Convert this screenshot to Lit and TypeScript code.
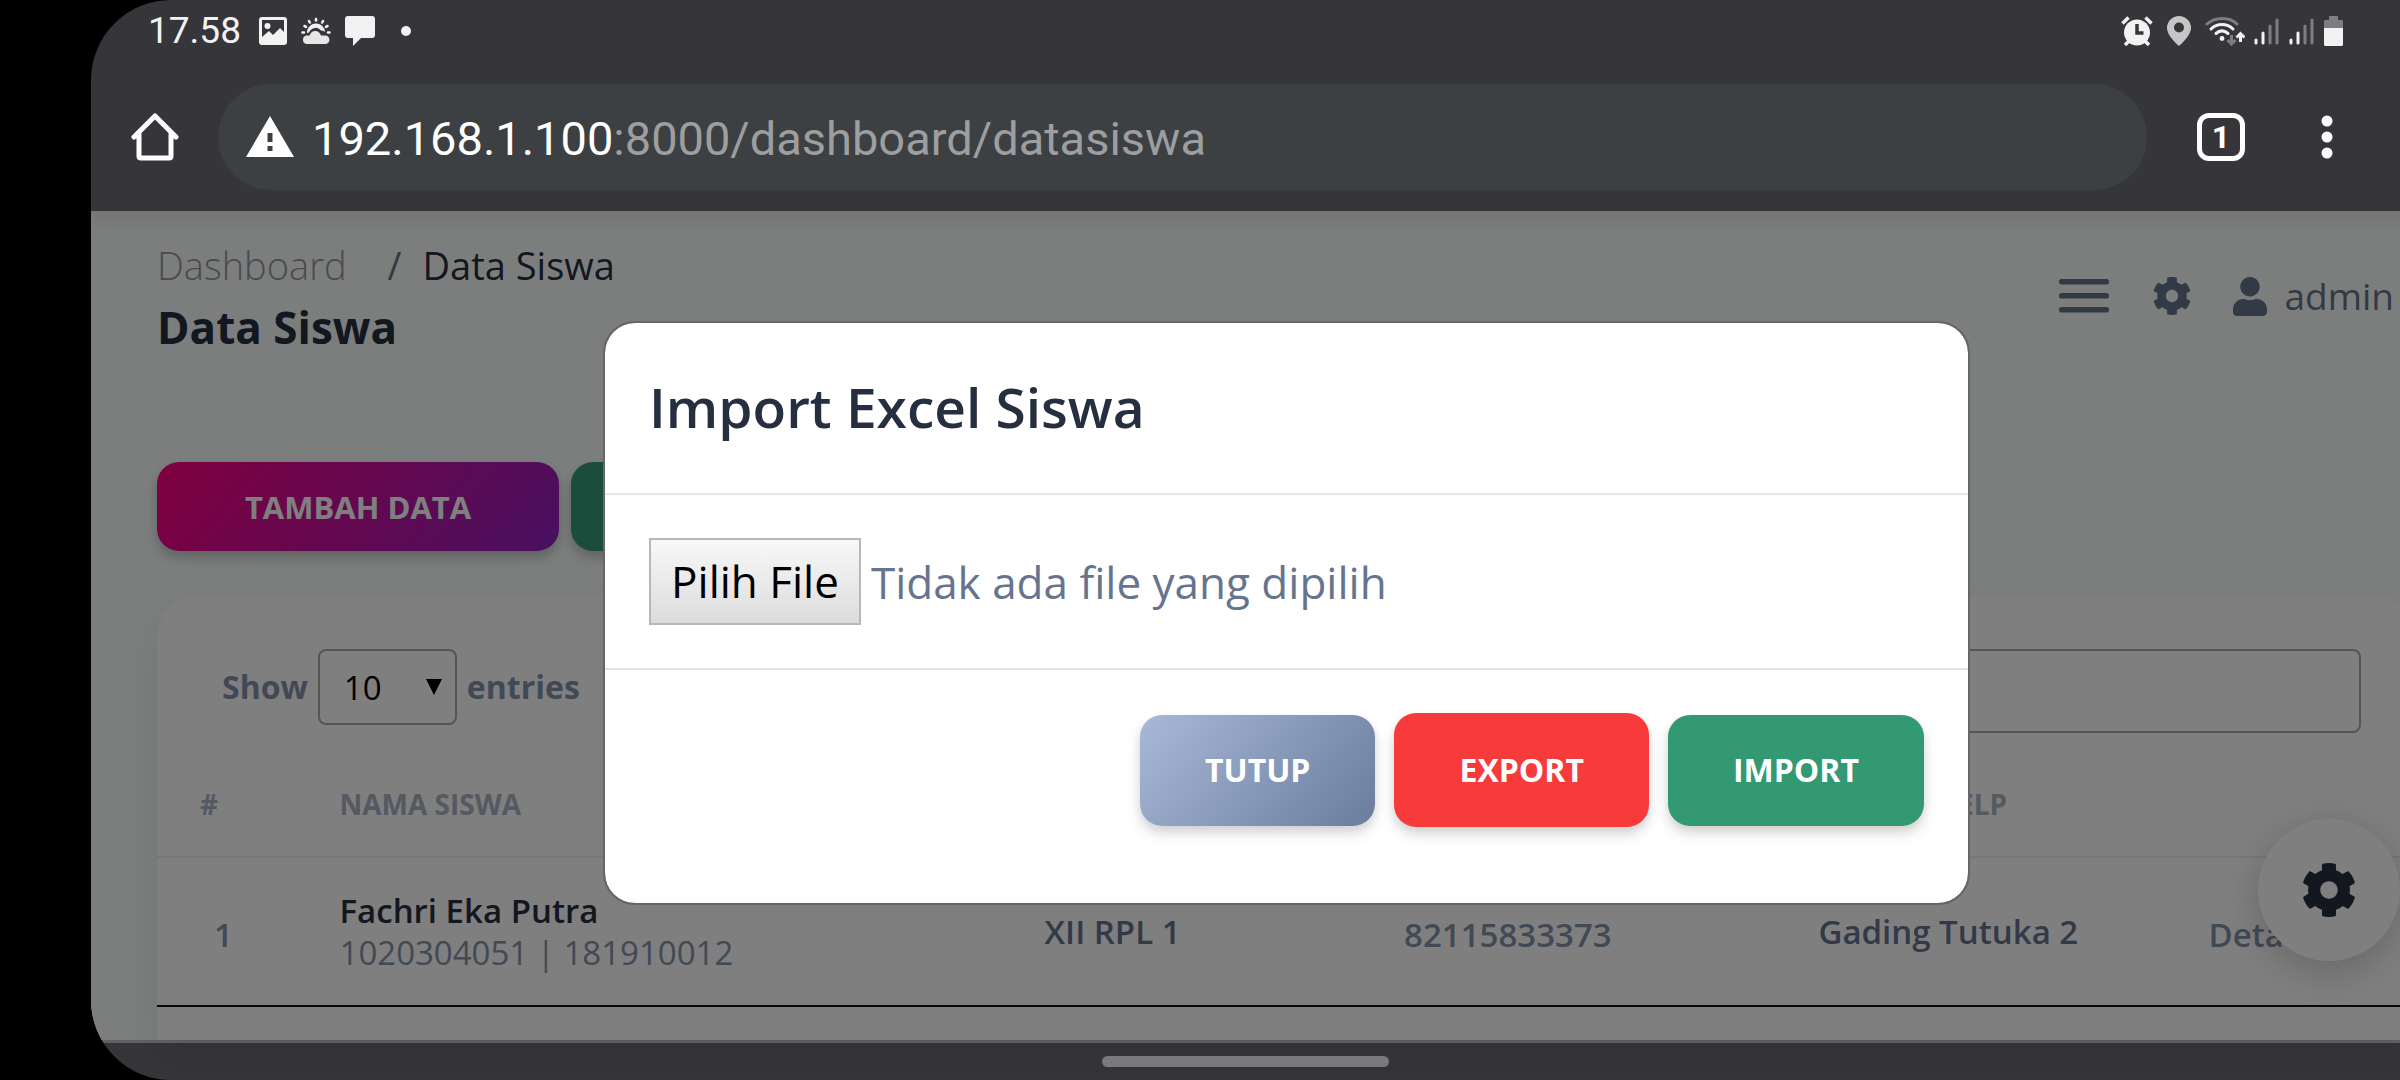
import { LitElement, html, css, svg } from "lit";
import { customElement } from "lit/decorators.js";

const cogPath =
  "M487.4 315.7l-42.6-24.6c4.3-23.2 4.3-47 0-70.2l42.6-24.6c4.9-2.8 7.1-8.6 5.5-14-11.1-35.6-30-67.8-54.7-94.6-3.8-4.1-10-5.1-14.8-2.3L380.8 110c-17.9-15.4-38.5-27.3-60.8-35.1V25.8c0-5.6-3.9-10.5-9.4-11.7-36.7-8.2-74.3-7.8-109.2 0-5.5 1.2-9.4 6.1-9.4 11.7V75c-22.2 7.9-42.8 19.8-60.8 35.1L88.7 85.5c-4.9-2.8-11-1.9-14.8 2.3-24.7 26.7-43.6 58.9-54.7 94.6-1.7 5.4.6 11.2 5.5 14L67.3 221c-4.3 23.2-4.3 47 0 70.2l-42.6 24.6c-4.9 2.8-7.1 8.6-5.5 14 11.1 35.6 30 67.8 54.7 94.6 3.8 4.1 10 5.1 14.8 2.3l42.6-24.6c17.9 15.4 38.5 27.3 60.8 35.1v49.2c0 5.6 3.9 10.5 9.4 11.7 36.7 8.2 74.3 7.8 109.2 0 5.5-1.2 9.4-6.1 9.4-11.7v-49.2c22.2-7.9 42.8-19.8 60.8-35.1l42.6 24.6c4.9 2.8 11 1.9 14.8-2.3 24.7-26.7 43.6-58.9 54.7-94.6 1.5-5.5-.7-11.3-5.6-14.1zM256 336c-44.1 0-80-35.9-80-80s35.9-80 80-80 80 35.9 80 80-35.9 80-80 80z";

const icon = (w: number, h: number, body: unknown, box = `0 0 ${w} ${h}`) =>
  html`<svg width=${w} height=${h} viewBox=${box} aria-hidden="true">${body}</svg>`;

const cog = (size: number) =>
  icon(size, size, svg`<path fill="currentColor" d=${cogPath} />`, "8 8 496 496");

const signal = () =>
  icon(
    26,
    28,
    svg`<g stroke-linecap="round" stroke-width="3">
      <path stroke="#f2f2f2" d="M2 23v3M9 16v10" />
      <path stroke="#7e7e82" d="M16 9v17M23 3v23" />
    </g>`
  );

@customElement("status-bar")
export class StatusBar extends LitElement {
  static styles = css`
    :host {
      display: flex;
      align-items: center;
      justify-content: space-between;
      height: 62px;
      padding: 0 57px;
      color: #f2f2f2;
      font: 37px/62px Roboto, sans-serif;
    }
    .group {
      display: flex;
      align-items: center;
      gap: 14px;
    }
    .network {
      gap: 9px;
    }
    .time {
      margin-right: 4px;
    }
    .more {
      width: 10px;
      height: 10px;
      margin-left: 12px;
      border-radius: 50%;
      background: currentColor;
    }
    svg {
      display: block;
    }
  `;

  render() {
    return html`
      <div class="group">
        <span class="time">17.58</span>
        ${icon(
          28,
          28,
          svg`<path fill="#f2f2f2" fill-rule="evenodd" d="M3 0h22a3 3 0 0 1 3 3v22a3 3 0 0 1-3 3H3a3 3 0 0 1-3-3V3a3 3 0 0 1 3-3zM3 3v17l7-6 4 4 7-7 4 4V3zM8.500 6a3 3 0 1 1 0 6 3 3 0 0 1 0-6z" />`
        )}
        ${icon(
          30,
          28,
          svg`<g stroke="#f2f2f2" stroke-width="2.600" stroke-linecap="round"><path d="M15 2v1.500M8 4l.8 1.500M22 4l-.8 1.500M3.500 9l1.500.8M26.500 9l-1.500.8M1.500 15.500h1.500M28.500 15.500H27" /></g>
          <path fill="#f2f2f2" d="M6 16a9 9 0 0 1 18-1c-1-1-2.500-1.500-4-1.500-2-2-4-3-6-2.500-3 .5-5 2-6 4.500z" />
          <path fill="#e6e6e7" d="M5 27a4.500 4.500 0 0 1 0-8.500h3.500c1-3 3.500-5 6.500-4.500 2.500.3 4 2 5 4.500h4a4.300 4.300 0 0 1 1 8.500z" />`
        )}
        ${icon(
          30,
          30,
          svg`<path fill="#f2f2f2" d="M3 0h24a3 3 0 0 1 3 3v16a3 3 0 0 1-3 3H16l-8 8v-8H3a3 3 0 0 1-3-3V3a3 3 0 0 1 3-3z" />`
        )}
        <span class="more"></span>
      </div>
      <div class="group">
        ${icon(
          32,
          30,
          svg`<circle cx="16" cy="16.500" r="13" fill="#f2f2f2" />
          <g stroke="#f2f2f2" stroke-width="3.500"><path d="M1.500 7.500l6-6M30.500 7.500l-6-6M4 29l4-4M28 29l-4-4" /></g>
          <path d="M16 8v9h6.500" fill="none" stroke="#36363a" stroke-width="3.500" />`
        )}
        ${icon(
          24,
          30,
          svg`<path fill="#c6c6c7" fill-rule="evenodd" d="M12 0a12 12 0 0 1 12 12c0 8-12 18-12 18S0 20 0 12A12 12 0 0 1 12 0zm0 6.500a5 5 0 1 0 0 10 5 5 0 0 0 0-10z" />`
        )}
        <div class="group network">
          ${icon(
            40,
            30,
            svg`<g fill="none" stroke-width="3" stroke-linecap="round">
              <path stroke="#7e7e82" d="M2 8C10 .5 25 .5 32 8" />
              <path stroke="#f2f2f2" d="M6 13c6-6 16-6 22 0M11 17.500c4-3.500 8-3.500 12 0" />
            </g>
            <circle cx="17" cy="22.500" r="2.400" fill="#f2f2f2" />
            <path fill="none" stroke="#7e7e82" stroke-width="3" d="M26.500 19v8.500M22.500 24l4 4 4-4" />
            <path fill="none" stroke="#f2f2f2" stroke-width="3" d="M35.500 26v-8.500M31.500 21.500l4-4 4 4" />`
          )}
          ${signal()} ${signal()}
          ${icon(
            19,
            30,
            svg`<path fill="#7e7e82" d="M5 0h9v4h4l1 1v7H0V5l1-1h4z" />
            <path fill="#f2f2f2" d="M0 12h19v17l-1 1H1l-1-1z" />`
          )}
        </div>
      </div>
    `;
  }
}

@customElement("browser-bar")
export class BrowserBar extends LitElement {
  static styles = css`
    :host {
      display: flex;
      align-items: center;
      height: 106px;
      padding: 22px 67px 21px 40px;
      color: #fff;
    }
    button {
      flex: none;
      display: flex;
      padding: 0;
      border: 0;
      background: none;
      color: inherit;
      cursor: pointer;
    }
    .address {
      flex: 1;
      display: flex;
      align-items: center;
      gap: 18px;
      height: 106px;
      margin: 0 50px 0 39px;
      padding-left: 28px;
      border-radius: 53px;
      background: #3c4043;
      font: 47px/106px Roboto, sans-serif;
    }
    .url {
      padding-top: 3px;
    }
    .path {
      color: #9c9ea0;
    }
    .tabs {
      align-items: center;
      justify-content: center;
      box-sizing: border-box;
      width: 48px;
      height: 48px;
      margin-right: 76px;
      border: 5px solid #fff;
      border-radius: 12px;
      font: 700 32px/38px Roboto, sans-serif;
    }
    svg {
      display: block;
    }
  `;

  render() {
    return html`
      <button aria-label="Home">
        ${icon(
          48,
          48,
          svg`<path fill="none" stroke="#fff" stroke-width="5" stroke-linejoin="round" stroke-linecap="round" d="M3 24L24 3l21 21M8 21v22q0 2 2 2h28q2 0 2-2V21" />`
        )}
      </button>
      <div class="address">
        ${icon(
          48,
          42,
          svg`<path fill="#fff" fill-rule="evenodd" d="M24 0l24 41H0zM21.500 17v9h5v-9zM21.500 30v5h5v-5z" />`
        )}
        <span class="url">192.168.1.100<span class="path">:8000/dashboard/datasiswa</span></span>
      </div>
      <button class="tabs" aria-label="Tabs">1</button>
      <button aria-label="Menu">
        ${icon(
          12,
          44,
          svg`<g fill="#fff"><circle cx="6" cy="6" r="5.500" /><circle cx="6" cy="22" r="5.500" /><circle cx="6" cy="38" r="5.500" /></g>`
        )}
      </button>
    `;
  }
}

@customElement("student-page")
export class StudentPage extends LitElement {
  static styles = css`
    :host {
      display: flex;
      flex-direction: column;
      box-sizing: border-box;
      padding: 23px 66px 0;
      background: #f8fdfa;
      color: #67748e;
      font: 33px/42px "Open Sans", sans-serif;
    }
    a {
      color: inherit;
      text-decoration: none;
    }
    button {
      border: 0;
      cursor: pointer;
      font-family: inherit;
    }
    .top,
    .account,
    .crumbs,
    .actions,
    .toolbar,
    .length {
      display: flex;
    }
    .top {
      align-items: center;
      justify-content: space-between;
      padding-right: 22px;
    }
    .crumbs {
      gap: 21px;
      font-size: 38px;
      line-height: 62px;
      color: #252f40;
    }
    .crumbs .parent {
      color: #94959f;
      font-weight: 300;
      margin-right: 20px;
    }
    .crumbs .slash {
      color: #6c757d;
    }
    h1 {
      margin: 0;
      font-size: 44px;
      line-height: 62px;
      color: #252f40;
    }
    .account {
      align-items: center;
      font-size: 37px;
      line-height: 62px;
    }
    .account button,
    .account a {
      display: flex;
      align-items: center;
      gap: 18px;
      padding: 0;
      background: none;
      color: inherit;
    }
    .account .menu {
      margin-right: 44px;
    }
    .account .config {
      margin-right: 42px;
    }
    .actions {
      gap: 12px;
      margin: 104px 0 45px;
    }
    .actions button {
      width: 402px;
      height: 89px;
      border-radius: 22px;
      box-shadow: 0 8px 14px rgba(0, 0, 0, 0.14), 0 4px 10px rgba(0, 0, 0, 0.1);
      color: #fff;
      font-size: 31px;
      font-weight: 700;
    }
    .add {
      background: linear-gradient(130deg, #ff0080, #9020c0);
    }
    .import {
      background: #349a76;
    }
    .card {
      flex: 1;
      padding-top: 53px;
      border-radius: 42px 42px 0 0;
      background: #fff;
      box-shadow: 0 20px 54px rgba(0, 0, 0, 0.07);
    }
    .toolbar {
      align-items: flex-start;
      justify-content: space-between;
      padding: 0 55px 0 65px;
      color: #8392ab;
    }
    .length {
      align-items: center;
      gap: 10px;
      font-size: 32px;
      font-weight: 700;
    }
    .picker {
      display: grid;
      align-items: center;
    }
    .picker select,
    .picker svg {
      grid-area: 1 / 1;
    }
    .picker svg {
      justify-self: end;
      margin-right: 15px;
      pointer-events: none;
    }
    select,
    input {
      box-sizing: border-box;
      border: 2px solid #aaa;
      border-radius: 8px;
      background: transparent;
      color: #000;
      font-family: inherit;
      font-size: 33px;
    }
    select {
      appearance: none;
      width: 139px;
      height: 76px;
      padding: 0 24px;
    }
    input {
      width: 580px;
      height: 84px;
      padding: 0 24px;
    }
    table {
      width: 100%;
      margin-top: 19px;
      border-collapse: separate;
      border-spacing: 0;
      table-layout: fixed;
    }
    .c-no {
      width: 6%;
    }
    .c-name {
      width: 27.8%;
    }
    .c-class {
      width: 17%;
    }
    .c-phone {
      width: 18%;
    }
    .c-place {
      width: 21%;
    }
    th {
      height: 104px;
      padding: 0;
      border-bottom: 2px solid #eceeef;
      color: #a8b2c4;
      font-size: 28px;
      font-weight: 700;
    }
    td {
      height: 147px;
      padding: 0;
      border-bottom: 2px solid #111;
      text-align: center;
      font-weight: 600;
    }
    td.soft {
      box-sizing: border-box;
      height: 149px;
      padding-top: 7px;
      color: #8392ab;
    }
    th.first {
      padding-left: 43px;
      text-align: left;
    }
    td.first {
      padding-left: 57px;
      text-align: left;
    }
    th.name,
    td.name {
      padding-left: 47px;
      text-align: left;
    }
    .name b {
      display: block;
      font-weight: 600;
      color: #252f40;
    }
    .name span {
      display: block;
      font-weight: 400;
      color: #8392ab;
    }
    td.last {
      padding-left: 23px;
      text-align: left;
    }
    svg {
      display: block;
    }
  `;

  render() {
    return html`
      <header class="top">
        <div>
          <nav class="crumbs">
            <a class="parent" href="#">Dashboard</a>
            <span class="slash">/</span>
            <span>Data Siswa</span>
          </nav>
          <h1>Data Siswa</h1>
        </div>
        <div class="account">
          <button class="menu" aria-label="Menu">
            ${icon(
              50,
              34,
              svg`<g fill="currentColor"><rect width="50" height="5.600" rx="2.500" /><rect y="14" width="50" height="5.600" rx="2.500" /><rect y="28" width="50" height="5.600" rx="2.500" /></g>`
            )}
          </button>
          <button class="config" aria-label="Settings">${cog(38)}</button>
          <a href="#">
            ${icon(
              34,
              39,
              svg`<path fill="currentColor" d="M224 256c70.7 0 128-57.3 128-128S294.700 0 224 0 96 57.300 96 128s57.300 128 128 128zm89.600 32h-16.700c-22.200 10.200-46.900 16-72.900 16s-50.600-5.800-72.900-16h-16.700C60.200 288 0 348.200 0 422.400V464c0 26.500 21.500 48 48 48h352c26.500 0 48-21.500 48-48v-41.600c0-74.200-60.200-134.400-134.400-134.400z" />`,
              "0 0 448 512"
            )}
            <span>admin</span>
          </a>
        </div>
      </header>
      <div class="actions">
        <button class="add">TAMBAH DATA</button>
        <button class="import" aria-label="Import"></button>
      </div>
      <section class="card">
        <div class="toolbar">
          <label class="length">
            Show
            <span class="picker">
              <select>
                <option>10</option>
              </select>
              ${icon(16, 16, svg`<path d="M0 0h16L8 16z" />`)}
            </span>
            entries
          </label>
          <input type="search" aria-label="Search" />
        </div>
        <table>
          <colgroup>
            <col class="c-no" />
            <col class="c-name" />
            <col class="c-class" />
            <col class="c-phone" />
            <col class="c-place" />
            <col />
          </colgroup>
          <thead>
            <tr>
              <th class="first">#</th>
              <th class="name">NAMA SISWA</th>
              <th></th>
              <th></th>
              <th>NO TELP</th>
              <th></th>
            </tr>
          </thead>
          <tbody>
            <tr>
              <td class="first soft">1</td>
              <td class="name"><b>Fachri Eka Putra</b><span>1020304051 | 181910012</span></td>
              <td>XII RPL 1</td>
              <td class="soft">82115833373</td>
              <td>Gading Tutuka 2</td>
              <td class="last soft"><a href="#">Detail</a></td>
            </tr>
          </tbody>
        </table>
      </section>
    `;
  }
}

@customElement("import-dialog")
export class ImportDialog extends LitElement {
  static styles = css`
    :host {
      display: block;
      border: 2px solid #666;
      border-radius: 32px;
      background: #fff;
      background-clip: padding-box;
      font-family: "Open Sans", sans-serif;
    }
    h2 {
      margin: 0;
      padding: 0 44px 2px;
      border-bottom: 2px solid #e3e6ea;
      color: #252f40;
      font-size: 55px;
      font-weight: 600;
      line-height: 168px;
    }
    .body {
      display: flex;
      align-items: center;
      gap: 10px;
      padding: 43px 44px;
      border-bottom: 2px solid #dee2e9;
      color: #67748e;
      font-size: 44px;
    }
    .file {
      position: relative;
      box-sizing: border-box;
      height: 87px;
      padding: 0 20px;
      border: 2px solid #b8b8b8;
      background: linear-gradient(#f8f8f8, #dcdcdc);
      color: #000;
      line-height: 83px;
      cursor: pointer;
    }
    .file input {
      position: absolute;
      inset: 0;
      width: 100%;
      opacity: 0;
    }
    .actions {
      display: flex;
      align-items: center;
      justify-content: flex-end;
      gap: 19px;
      padding: 43px 44px 76px;
    }
    button {
      height: 111px;
      padding: 0 65px;
      border: 0;
      border-radius: 22px;
      box-shadow: 0 8px 14px rgba(0, 0, 0, 0.12), 0 4px 10px rgba(0, 0, 0, 0.08);
      color: #fff;
      font: 700 32px/40px "Open Sans", sans-serif;
      cursor: pointer;
    }
    .close {
      background: linear-gradient(130deg, #a8b8d8, #6a7d9c);
    }
    .export {
      height: 114px;
      background: #f73a3a;
    }
    .import {
      background: #329973;
    }
  `;

  render() {
    return html`
      <h2>Import Excel Siswa</h2>
      <div class="body">
        <label class="file">Pilih File<input type="file" /></label>
        <span>Tidak ada file yang dipilih</span>
      </div>
      <div class="actions">
        <button class="close">TUTUP</button>
        <button class="export">EXPORT</button>
        <button class="import">IMPORT</button>
      </div>
    `;
  }
}

@customElement("app-root")
export class AppRoot extends LitElement {
  static styles = css`
    :host {
      display: block;
      padding-left: 91px;
      background: #000;
    }
    .screen {
      display: flex;
      flex-direction: column;
      min-height: 100vh;
      overflow: hidden;
      border-radius: 80px 0 0 80px;
      background: #36363a;
    }
    .view {
      flex: 1;
      display: flex;
      position: relative;
      margin-right: -82px;
    }
    student-page {
      flex: 1;
    }
    .backdrop {
      position: absolute;
      inset: 0;
      display: flex;
      align-items: flex-start;
      justify-content: center;
      padding-top: 110px;
      background: linear-gradient(rgba(0, 0, 0, 0.06), transparent 24px), rgba(0, 0, 0, 0.5);
    }
    import-dialog {
      width: 57%;
    }
    .fab {
      position: absolute;
      right: 82px;
      bottom: 79px;
      display: flex;
      align-items: center;
      justify-content: center;
      width: 142px;
      height: 142px;
      padding: 0;
      border: 0;
      border-radius: 50%;
      background: #fff;
      box-shadow: 0 10px 40px rgba(0, 0, 0, 0.2);
      color: #252f40;
    }
    .system {
      display: flex;
      justify-content: center;
      align-items: center;
      height: 37px;
      border-top: 3px solid #606167;
    }
    .pill {
      width: 287px;
      height: 11px;
      border-radius: 6px;
      background: #7e7e82;
    }
  `;

  render() {
    return html`
      <div class="screen">
        <status-bar></status-bar>
        <browser-bar></browser-bar>
        <main class="view">
          <student-page></student-page>
          <button class="fab" aria-label="Settings">${cog(54)}</button>
          <div class="backdrop"><import-dialog role="dialog"></import-dialog></div>
        </main>
        <footer class="system"><span class="pill"></span></footer>
      </div>
    `;
  }
}
